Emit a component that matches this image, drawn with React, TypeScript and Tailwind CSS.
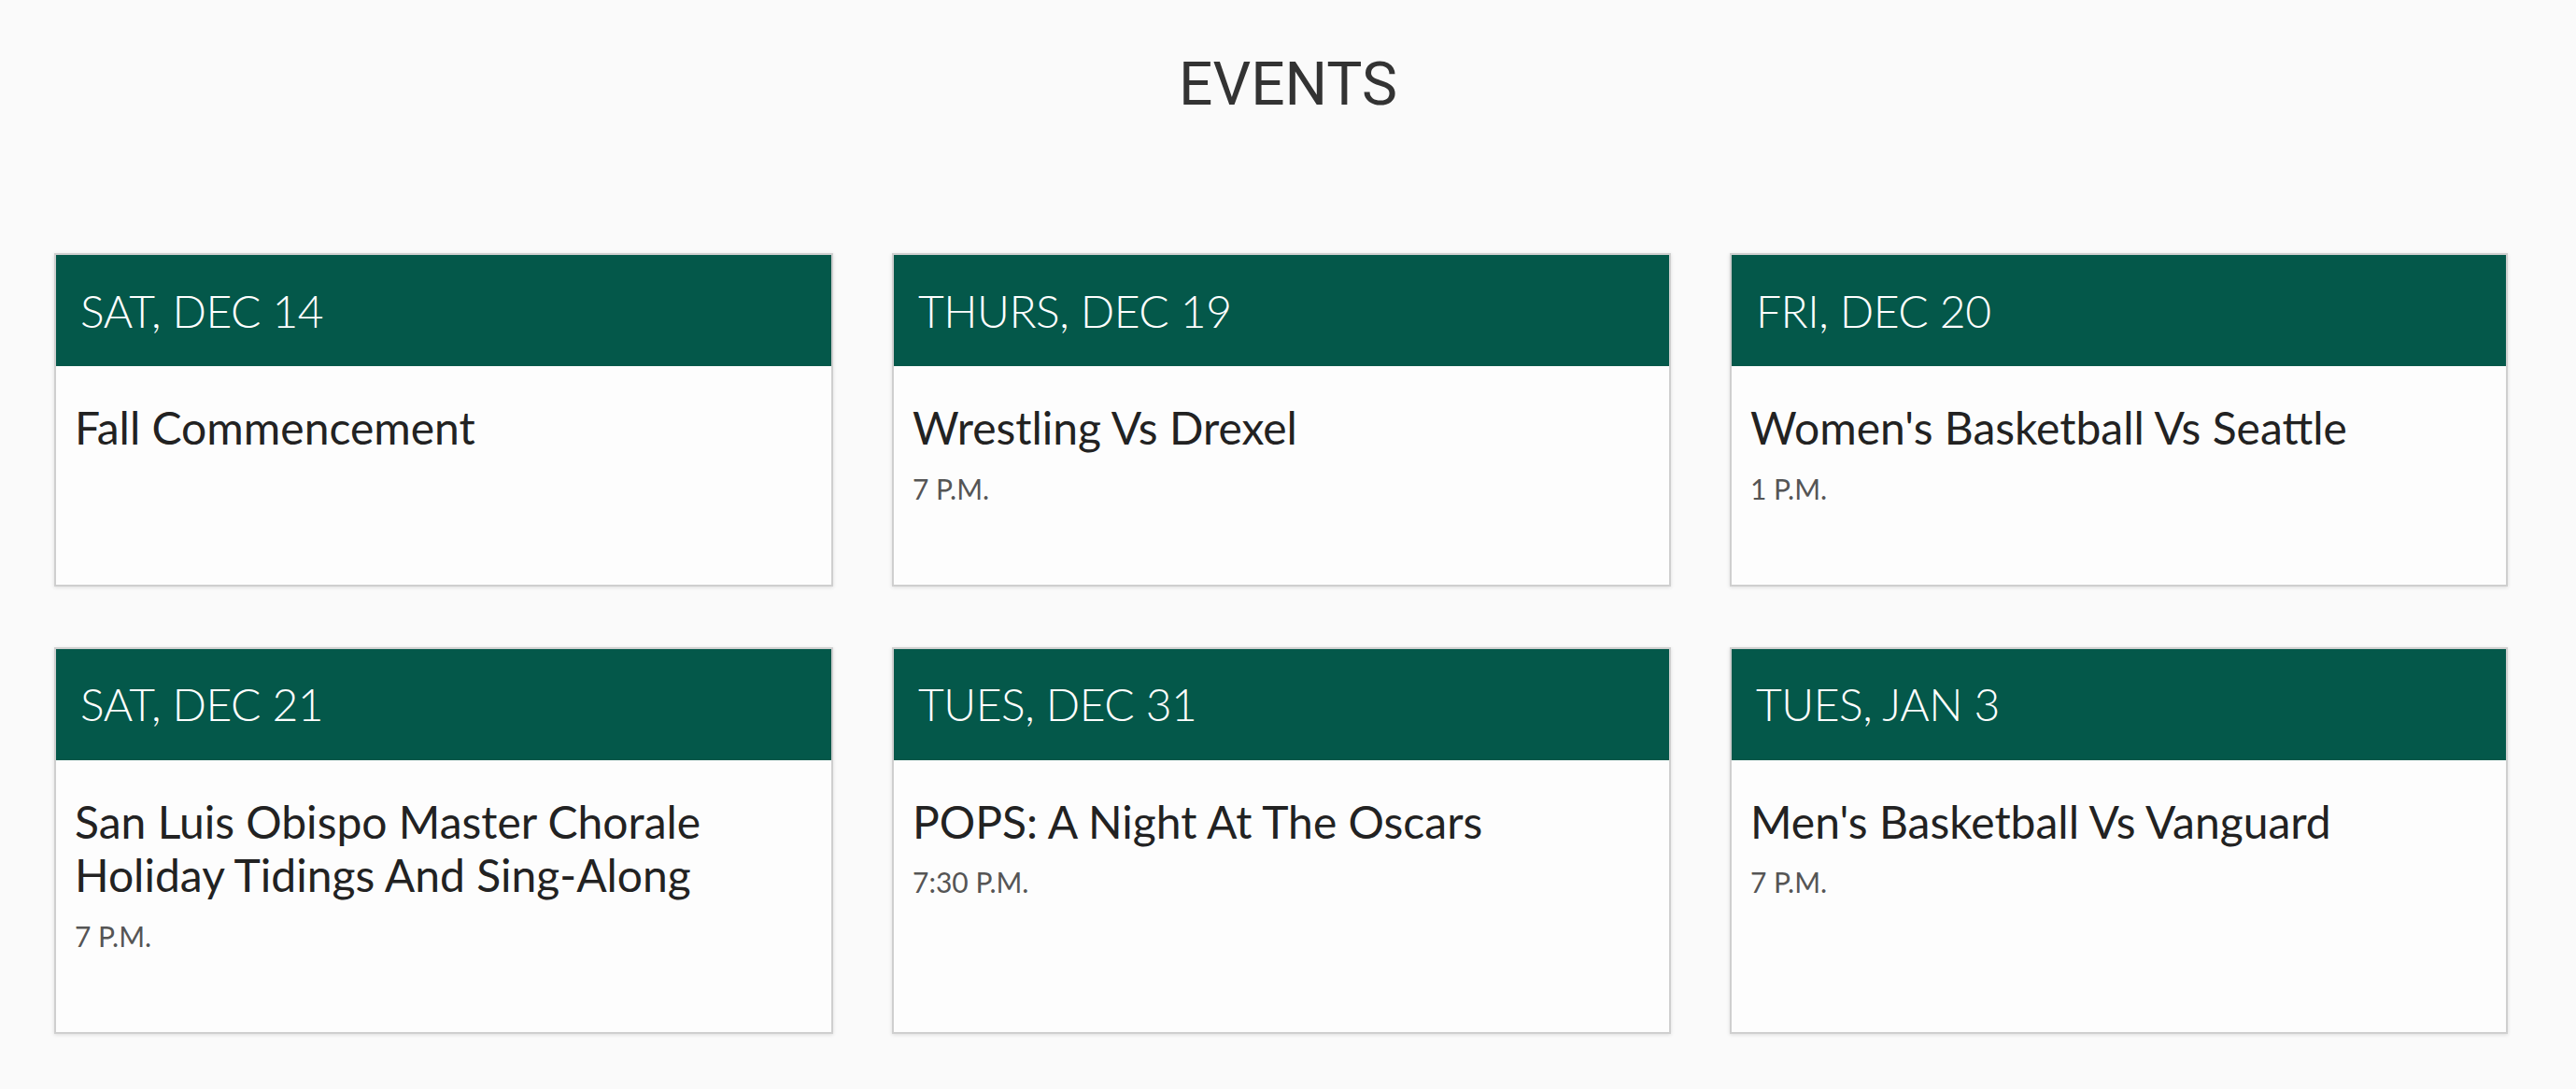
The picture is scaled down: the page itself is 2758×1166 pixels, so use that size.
import React from "react";

type Ev = { date: string; title: string; time?: string };

const events: Ev[] = [
  { date: "SAT, DEC 14", title: "Fall Commencement" },
  { date: "THURS, DEC 19", title: "Wrestling Vs Drexel", time: "7 P.M." },
  { date: "FRI, DEC 20", title: "Women's Basketball Vs Seattle", time: "1 P.M." },
  {
    date: "SAT, DEC 21",
    title: "San Luis Obispo Master Chorale Holiday Tidings And Sing-Along",
    time: "7 P.M.",
  },
  { date: "TUES, DEC 31", title: "POPS: A Night At The Oscars", time: "7:30 P.M." },
  { date: "TUES, JAN 3", title: "Men's Basketball Vs Vanguard", time: "7 P.M." },
];

function Card({ ev }: { ev: Ev }) {
  return (
    <div className="flex flex-col border-2 border-[#cfcfcf] bg-[#fdfdfd] shadow-[0_1px_4px_rgba(0,0,0,0.12)]">
      <div className="flex h-[119px] items-center bg-[#04584a] pl-[26px]">
        <span className="text-[48px] font-light leading-[1.2] tracking-[-0.5px] text-white">{ev.date}</span>
      </div>
      <div className="flex flex-col pl-[20px] pr-[24px] pt-[37px] pb-[85px]">
        <div className="max-w-[720px] text-[48px] font-normal leading-[1.2] text-[#222222]">{ev.title}</div>
        {ev.time && (
          <div className="mt-[18px] text-[30px] font-normal leading-[1.2] text-[#555555]">{ev.time}</div>
        )}
      </div>
    </div>
  );
}

export default function App() {
  return (
    <div className="min-h-[1166px] w-full bg-[#fafafa] font-['Lato',_'Noto_Sans',_sans-serif]">
      <div className="flex justify-center pt-[43px]">
        <h1 className="font-['Roboto',_'Liberation_Sans',_sans-serif] text-[64px] font-normal text-[#333333]">
          EVENTS
        </h1>
      </div>
      <div className="grid grid-cols-[834px_834px_833px] gap-x-[63px] gap-y-[65px] pl-[58px] pt-[132px]">
        {events.map((ev) => (
          <Card key={ev.date} ev={ev} />
        ))}
      </div>
    </div>
  );
}
